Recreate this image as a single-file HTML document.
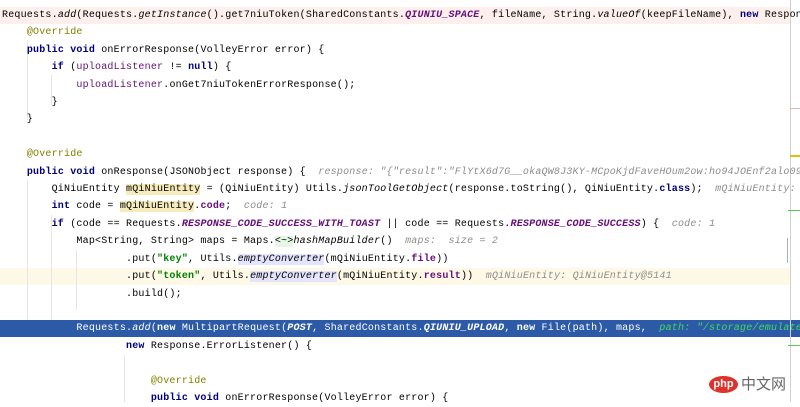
<!DOCTYPE html><html><head><meta charset="utf-8"><style>
body{margin:0;width:800px;height:402px;overflow:hidden;background:#fff;position:relative;font-family:"Liberation Mono","Noto Sans CJK SC",monospace;font-size:10px;}
.l{position:absolute;left:2px;height:17px;line-height:17px;white-space:pre;color:#000;letter-spacing:0.2px}
.k{color:#000080;font-weight:bold}.a{color:#808000}.f{color:#660e7a}.fb{color:#660e7a;font-weight:bold}
.c{color:#660e7a;font-weight:bold;font-style:italic}.s{color:#008000;font-weight:bold}.h{color:#8c8c8c;font-style:italic}
.i{font-style:italic}.y{background:#f6ebbc}.e{background:#e4e4ff}
.bg{position:absolute;left:0;width:790px;height:17px}
.g{position:absolute;width:1px;background:#e6e6e6}
</style></head><body>
<div class="bg" style="top:7px;background:#fcefec"></div>
<div class="bg" style="top:268px;background:#fdf9e6"></div>
<div class="bg" style="top:320px;width:800px;background:#2d5aa6"></div>
<div style="position:absolute;left:790px;top:0;width:1px;height:402px;background:#d0d0d0"></div>
<div class="g" style="left:27px;top:40px;height:80px"></div>
<div class="g" style="left:51px;top:75px;height:30px"></div>
<div class="g" style="left:27px;top:180px;height:140px"></div>
<div class="g" style="left:51px;top:215px;height:105px"></div>
<div class="g" style="left:76px;top:250px;height:60px"></div>
<div class="g" style="left:124px;top:355px;height:47px"></div>
<div style="position:absolute;left:790px;top:108px;width:10px;height:1px;background:#f0b0b0"></div>
<div style="position:absolute;left:790px;top:155px;width:10px;height:2px;background:#e0c000"></div>
<div style="position:absolute;left:788px;top:210px;width:12px;height:1px;background:#5c5"></div>
<div style="position:absolute;left:788px;top:345px;width:12px;height:1px;background:#5c5"></div>
<div style="position:absolute;left:787px;top:238px;width:1px;height:25px;background:#aac"></div>
<div class="l" style="top:7px">Requests.<span class="i">add</span>(Requests.<span class="i">getInstance</span>().get7niuToken(SharedConstants.<span class="c">QIUNIU_SPACE</span>, fileName, String.<span class="i">valueOf</span>(keepFileName), <span class="k">new</span> Response</div>
<div class="l" style="top:24px">    <span class="a">@Override</span></div>
<div class="l" style="top:42px">    <span class="k">public void</span> onErrorResponse(VolleyError error) {</div>
<div class="l" style="top:59px">        <span class="k">if</span> (<span class="f">uploadListener</span> != <span class="k">null</span>) {</div>
<div class="l" style="top:77px">            <span class="f">uploadListener</span>.onGet7niuTokenErrorResponse();</div>
<div class="l" style="top:94px">        }</div>
<div class="l" style="top:111px">    }</div>
<div class="l" style="top:146px">    <span class="a">@Override</span></div>
<div class="l" style="top:164px">    <span class="k">public void</span> onResponse(JSONObject response) {  <span class="h">response: "{"result":"FlYtX6d7G__okaQW8J3KY-MCpoKjdFaveHOum2ow:ho94JOEnf2alo09</span></div>
<div class="l" style="top:181px">        QiNiuEntity <span class="y">mQiNiuEntity</span> = (QiNiuEntity) Utils.<span class="i">jsonToolGetObject</span>(response.toString(), QiNiuEntity.<span class="k">class</span>);  <span class="h">mQiNiuEntity: Qi</span></div>
<div class="l" style="top:198px">        <span class="k">int</span> code = <span class="y">mQiNiuEntity</span>.<span class="fb">code</span>;  <span class="h">code: 1</span></div>
<div class="l" style="top:216px">        <span class="k">if</span> (code == Requests.<span class="c">RESPONSE_CODE_SUCCESS_WITH_TOAST</span> || code == Requests.<span class="c">RESPONSE_CODE_SUCCESS</span>) {  <span class="h">code: 1</span></div>
<div class="l" style="top:233px">            Map&lt;String, String&gt; maps = Maps.<span style="background:#e6f5e6">&lt;~&gt;</span><span class="i">hashMapBuilder</span>()  <span class="h">maps:  size = 2</span></div>
<div class="l" style="top:251px">                    .put(<span class="s">"key"</span>, Utils.<span class="i e">emptyConverter</span>(mQiNiuEntity.<span class="fb">file</span>))</div>
<div class="l" style="top:268px">                    .put(<span class="s">"token"</span>, Utils.<span class="i e">emptyConverter</span>(mQiNiuEntity.<span class="fb">result</span>))  <span class="h">mQiNiuEntity: QiNiuEntity@5141</span></div>
<div class="l" style="top:286px">                    .build();</div>
<div class="l" style="top:320px;color:#fff">            Requests.<span class="i">add</span>(<b>new</b> MultipartRequest(<b><i>POST</i></b>, SharedConstants.<b><i>QIUNIU_UPLOAD</i></b>, <b>new</b> File(path), maps,  <i style="color:#3ddc5a">path: "/storage/emulated</i></div>
<div class="l" style="top:338px">                    <span class="k">new</span> Response.ErrorListener() {</div>
<div class="l" style="top:373px">                        <span class="a">@Override</span></div>
<div class="l" style="top:390px">                        <span class="k">public void</span> onErrorResponse(VolleyError error) {</div>
<div style="position:absolute;left:709px;top:376px;width:29px;height:17px;border-radius:50%;background:#e0322c;color:#fff;font:bold 11px 'Liberation Sans',sans-serif;text-align:center;line-height:16px">php</div>
<div style="position:absolute;left:741px;top:374px;color:#666;font:15px 'Noto Sans CJK SC',sans-serif;line-height:20px">中文网</div>
</body></html>
